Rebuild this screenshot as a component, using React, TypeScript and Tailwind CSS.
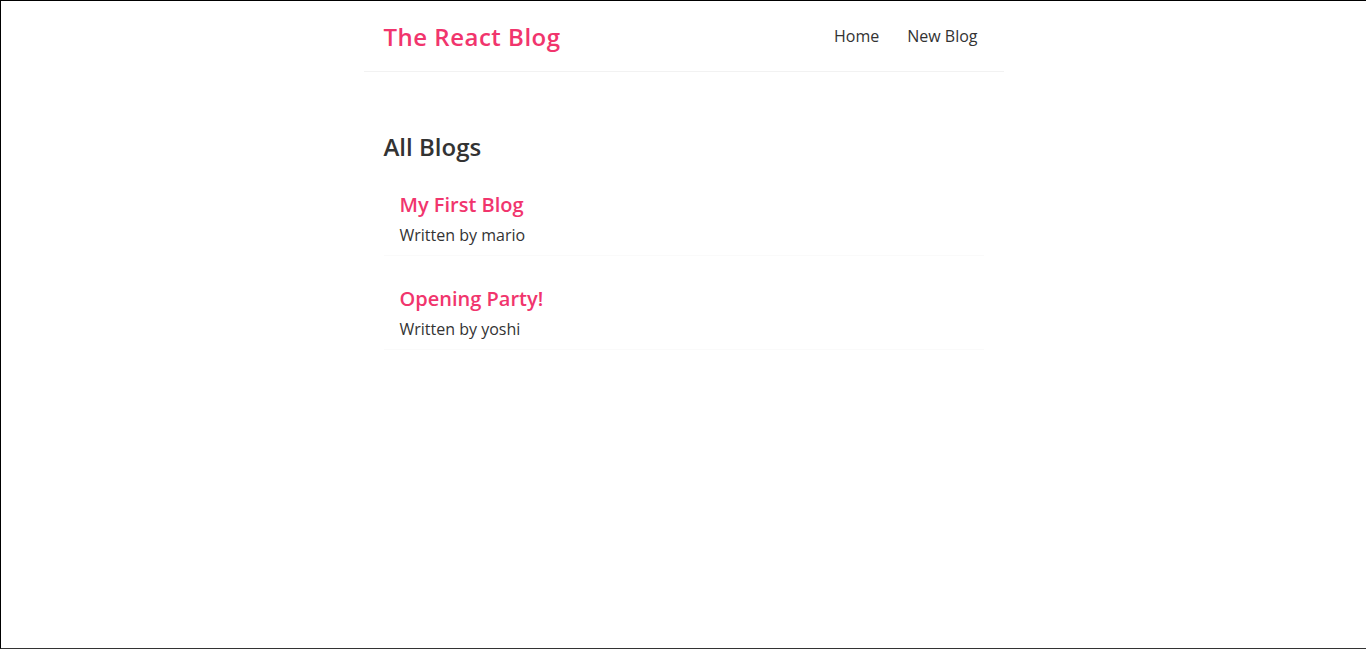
const blogs = [
  { title: "My First Blog", author: "mario", id: 1 },
  { title: "Opening Party!", author: "yoshi", id: 2 },
];

function Navbar() {
  return (
    <nav className="mx-auto flex h-[71px] max-w-[640px] items-center border-b border-[#f2f2f2] px-5">
      <h1 className="mt-0.5 text-[24px] leading-[30px] font-semibold tracking-[0.5px] text-[#f1356d]">
        The React Blog
      </h1>
      <div className="ml-auto flex">
        <a href="/" className="ml-4 px-1.5 text-[16px] leading-[20px] text-[#333]">
          Home
        </a>
        <a href="/create" className="ml-4 px-1.5 text-[16px] leading-[20px] text-[#333]">
          New Blog
        </a>
      </div>
    </nav>
  );
}

export default function App() {
  return (
    <div
      className="h-[649px] border-t border-b border-l border-t-black border-b-[#333] border-l-black bg-white text-[#333]"
      style={{ fontFamily: "'Open Sans', Lato, sans-serif" }}
    >
      <Navbar />
      <div className="mx-auto mt-10 max-w-[640px] p-5">
        <h2 className="text-[24px] leading-[30px] font-semibold">All Blogs</h2>
        <div className="mt-5 flex flex-col gap-5">
          {blogs.map((blog) => (
            <div key={blog.id} className="border-b border-[#fafafa] px-4 py-2.5">
              <h2 className="mb-2 text-[20px] leading-[25px] font-semibold text-[#f1356d]">{blog.title}</h2>
              <p className="text-[16px] leading-[20px]">Written by {blog.author}</p>
            </div>
          ))}
        </div>
      </div>
    </div>
  );
}
